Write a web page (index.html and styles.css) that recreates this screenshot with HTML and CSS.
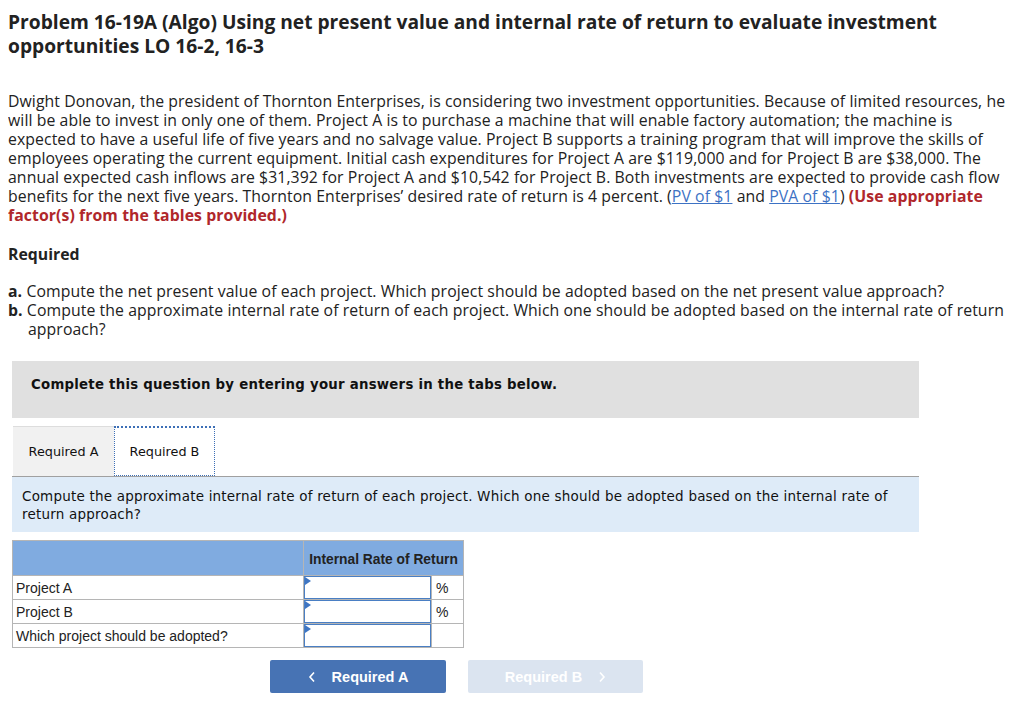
FILE: index.html
```html
<!DOCTYPE html>
<html>
<head>
<meta charset="utf-8">
<link rel="stylesheet" href="styles.css">
</head>
<body>
<h1 class="title">Problem 16-19A (Algo) Using net present value and internal rate of return to evaluate investment opportunities LO 16-2, 16-3</h1>
<p class="para">Dwight Donovan, the president of Thornton Enterprises, is considering two investment opportunities. Because of limited resources, he will be able to invest in only one of them. Project A is to purchase a machine that will enable factory automation; the machine is expected to have a useful life of five years and no salvage value. Project B supports a training program that will improve the skills of employees operating the current equipment. Initial cash expenditures for Project A are $119,000 and for Project B are $38,000. The annual expected cash inflows are $31,392 for Project A and $10,542 for Project B. Both investments are expected to provide cash flow benefits for the next five years. Thornton Enterprises’ desired rate of return is 4 percent. (<a class="lnk" href="#">PV of $1</a> and <a class="lnk" href="#">PVA of $1</a>) <span class="red">(Use appropriate factor(s) from the tables provided.)</span></p>
<h2 class="req">Required</h2>
<ol class="list">
<li><b>a.</b> Compute the net present value of each project. Which project should be adopted based on the net present value approach?</li>
<li><b>b.</b> Compute the approximate internal rate of return of each project. Which one should be adopted based on the internal rate of return approach?</li>
</ol>
<div class="panel">
<div class="notice">Complete this question by entering your answers in the tabs below.</div>
<div class="tabs">
<div class="tab">Required A</div>
<div class="tab active">Required B</div>
</div>
<div class="info">Compute the approximate internal rate of return of each project. Which one should be adopted based on the internal rate of return approach?</div>
<table class="grid">
<colgroup><col class="w1"><col class="w2"><col class="w3"></colgroup>
<tr class="head"><th></th><th colspan="2" class="hd">Internal Rate of Return</th></tr>
<tr><td class="c1">Project A</td><td class="in"><div class="box"><span class="tri"></span></div></td><td class="pct">%</td></tr>
<tr><td class="c1">Project B</td><td class="in"><div class="box"><span class="tri"></span></div></td><td class="pct">%</td></tr>
<tr><td class="c1">Which project should be adopted?</td><td class="in"><div class="box"><span class="tri"></span></div></td><td class="pct"></td></tr>
</table>
<div class="nav">
<button class="btn prev"><svg class="chev" width="8" height="12" viewBox="0 0 8 12"><path d="M6 1.5 L2 6 L6 10.5" fill="none" stroke="#fff" stroke-width="1.6"/></svg>Required A</button>
<button class="btn next">Required B<svg class="chev r" width="8" height="12" viewBox="0 0 8 12"><path d="M2 1.5 L6 6 L2 10.5" fill="none" stroke="#fff" stroke-width="1.6"/></svg></button>
</div>
</div>
</body>
</html>
```
FILE: styles.css
```css
body {
  margin: 8px;
  background: #fff;
  color: #222;
  font-family: "Open Sans", Lato, sans-serif;
}
.title {
  font-size: 19.2px;
  line-height: 24px;
  font-weight: 700;
  margin: 2px 0 0 0;
  color: #222;
}
.para {
  font-size: 15.8px;
  letter-spacing: 0.08px;
  line-height: 19px;
  margin: 34px 0 0 0;
  color: #222;
}
.lnk {
  color: #3d72c4;
  text-decoration: underline;
}
.red {
  color: #b0272b;
  font-weight: 700;
}
.req {
  font-size: 15.8px;
  font-weight: 700;
  line-height: 19px;
  margin: 20px 0 0 0;
}
.list {
  list-style: none;
  padding: 0;
  margin: 18px 0 0 0;
  font-size: 15.8px;
  letter-spacing: 0.08px;
  line-height: 19px;
}
.list li {
  padding-left: 20px;
  text-indent: -20px;
}
.panel {
  margin: 22px 0 0 4px;
  width: 907px;
  font-family: "DejaVu Sans", Verdana, sans-serif;
}
.notice {
  background: #e0e0e0;
  height: 57px;
  box-sizing: border-box;
  padding: 16px 0 0 19px;
  font-size: 13.3px;
  font-weight: 700;
  color: #111;
  letter-spacing: 0.25px;
}
.tabs {
  display: flex;
  margin-top: 8px;
  border-bottom: 1px solid #a0a0a0;
  height: 50px;
}
.tab {
  width: 101px;
  box-sizing: border-box;
  display: flex;
  align-items: center;
  justify-content: center;
  font-size: 12.8px;
  color: #111;
  background: #f1f1f1;
  border-top: 1px solid #ddd;
  margin-left: 1px;
}
.tab.active {
  background: #fff;
  border: 1px dotted #3d6fb6;
  border-top: 2px dotted #3d6fb6;
  margin-left: 0;
}
.info {
  background: #deebf8;
  height: 55px;
  box-sizing: border-box;
  padding: 10px 10px 0 10px;
  font-size: 13.5px;
  letter-spacing: 0.2px;
  line-height: 18px;
  color: #111;
}
.grid {
  margin-top: 8px;
  border-collapse: collapse;
  table-layout: fixed;
  font-family: "Liberation Sans", Arial, sans-serif;
  font-size: 14px;
  width: 451px;
}
.w1 { width: 291px; }
.w2 { width: 128px; }
.w3 { width: 32px; }
.grid td, .grid th {
  border: 1px solid #b5b5b5;
  padding: 0;
}
.grid .head th {
  background: #80abe0;
  height: 34px;
}
.hd {
  font-weight: 700;
  font-size: 13.8px;
  color: #222;
  text-align: center;
  vertical-align: middle;
  white-space: nowrap;
  padding-top: 2px !important;
  box-sizing: border-box;
}
.c1 {
  padding-left: 3px !important;
  color: #222;
  height: 23px;
  white-space: nowrap;
}
.box {
  position: relative;
  height: 23px;
  border: 1px solid #4a7fc4;
  box-sizing: border-box;
  background: #fff;
}
.tri {
  position: absolute;
  left: 0;
  top: 0;
  width: 0;
  height: 0;
  border-top: 4px solid transparent;
  border-bottom: 4px solid transparent;
  border-left: 6px solid #3f76c3;
}
.pct {
  padding-left: 4px !important;
  color: #222;
}
.nav {
  display: flex;
  gap: 22px;
  margin-top: 12px;
  padding-left: 258px;
}
.btn {
  width: 176px;
  height: 33px;
  border: none;
  border-radius: 2px;
  font-family: "Liberation Sans", Arial, sans-serif;
  font-weight: 700;
  font-size: 14.5px;
  color: #fff;
  display: flex;
  align-items: center;
  justify-content: center;
  padding: 0;
}
.prev {
  background: #4773b4;
}
.next {
  background: #dbe4f0;
  width: 175px;
}
.chev {
  margin-right: 16px;
}
.chev.r {
  margin-right: 0;
  margin-left: 16px;
}
```
